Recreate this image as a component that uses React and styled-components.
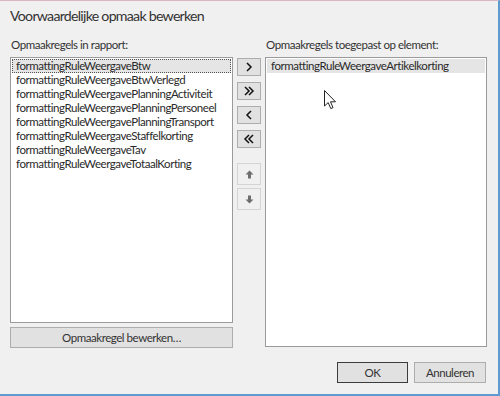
import React from "react";
import styled, { createGlobalStyle } from "styled-components";

const Global = createGlobalStyle`
  html, body { margin: 0; padding: 0; background: #f0f0f0; }
  body { font-family: Lato, "Noto Sans", sans-serif; }
`;

const Window = styled.div`
  position: relative;
  width: 500px;
  height: 396px;
  box-sizing: border-box;
  background: #f0f0f0;
  border-top: 1px solid #d9b7c6;
  border-right: 2px solid #5b9bd0;
  border-bottom: 2px solid #5b9bd0;
  color: #262626;
  font-size: 11.5px;
  letter-spacing: -0.45px;
  display: flex;
  flex-direction: column;
`;

const Title = styled.div`
  font-size: 14.2px;
  letter-spacing: -0.75px;
  line-height: 20px;
  color: #333;
  padding: 5px 0 0 10px;
  height: 36px;
  box-sizing: border-box;
`;

const Body = styled.div`
  display: grid;
  grid-template-columns: 223px 24px 222px;
  column-gap: 4px;
  margin-left: 10px;
`;

const Column = styled.div`
  display: flex;
  flex-direction: column;
`;

const Label = styled.div`
  height: 20px;
  line-height: 16px;
  padding-left: 1px;
  color: #333;
`;

const ListBox = styled.div`
  position: relative;
  height: ${(p) => p.$h}px;
  box-sizing: border-box;
  background: #fff;
  border: 1px solid #9a9a9a;
  padding: 1px 1px;
`;

const Item = styled.div`
  height: 14px;
  box-sizing: border-box;
  padding-left: ${(p) => (p.$focus ? 3 : 4)}px;
  white-space: nowrap;
  color: #2a2a2a;
  background: ${(p) => (p.$sel ? "#e5e5e5" : "transparent")};
  border: ${(p) => (p.$focus ? "1px dotted #555" : "none")};
  line-height: ${(p) => (p.$focus ? 12 : 14)}px;
`;

const WideButton = styled.button`
  margin-top: 4px;
  height: 21px;
  box-sizing: border-box;
  background: #e1e1e1;
  border: 1px solid #adadad;
  font-family: inherit;
  font-size: inherit;
  letter-spacing: inherit;
  color: #333;
  padding: 0;
`;

const ArrowColumn = styled.div`
  display: flex;
  flex-direction: column;
  padding-top: 21px;
  gap: 6px;
`;

const ArrowButton = styled.button`
  width: 24px;
  height: ${(p) => (p.$disabled ? 22 : 18)}px;
  box-sizing: border-box;
  padding: 0;
  margin-top: ${(p) => p.$mt || 0}px;
  background: ${(p) => (p.$disabled ? "#f0f0f0" : "#e1e1e1")};
  border: 1px solid ${(p) => (p.$disabled ? "#d4d4d4" : "#adadad")};
  display: flex;
  align-items: center;
  justify-content: center;
`;

const Footer = styled.div`
  display: flex;
  justify-content: flex-end;
  gap: 6px;
  padding: 14px 12px 0 0;
`;

const DialogButton = styled.button`
  width: ${(p) => p.$w}px;
  height: 21px;
  box-sizing: border-box;
  padding: 0;
  background: #e1e1e1;
  border: 1px solid ${(p) => (p.$default ? "#3c3c3c" : "#adadad")};
  font-family: inherit;
  font-size: inherit;
  letter-spacing: inherit;
  color: #333;
`;

const Cursor = styled.svg`
  position: absolute;
  left: 58px;
  top: 32px;
`;

const Chevron = ({ dir = "right", double = false }) => {
  const one = (ox) =>
    dir === "right"
      ? `M${ox} 1 L${ox + 4} 5 L${ox} 9`
      : `M${ox + 4} 1 L${ox} 5 L${ox + 4} 9`;
  return (
    <svg width="12" height="10" viewBox="0 0 12 10">
      {double ? (
        <>
          <path d={one(2)} stroke="#111" strokeWidth="1.5" fill="none" />
          <path d={one(6)} stroke="#111" strokeWidth="1.5" fill="none" />
        </>
      ) : (
        <path d={one(4)} stroke="#111" strokeWidth="1.5" fill="none" />
      )}
    </svg>
  );
};

const UpDown = ({ down }) => (
  <svg width="9" height="9" viewBox="0 0 9 9" style={down ? { transform: "rotate(180deg)" } : undefined}>
    <path d="M4.5 0.5 L8.5 4.5 L6 4.5 L6 8.5 L3 8.5 L3 4.5 L0.5 4.5 Z" fill="#6e6e6e" />
  </svg>
);

const leftRules = [
  "formattingRuleWeergaveBtw",
  "formattingRuleWeergaveBtwVerlegd",
  "formattingRuleWeergavePlanningActiviteit",
  "formattingRuleWeergavePlanningPersoneel",
  "formattingRuleWeergavePlanningTransport",
  "formattingRuleWeergaveStaffelkorting",
  "formattingRuleWeergaveTav",
  "formattingRuleWeergaveTotaalKorting",
];

export default function App() {
  return (
    <>
      <Global />
      <Window>
        <Title>Voorwaardelijke opmaak bewerken</Title>
        <Body>
          <Column>
            <Label>Opmaakregels in rapport:</Label>
            <ListBox $h={266}>
              {leftRules.map((r, i) => (
                <Item key={r} $sel={i === 0} $focus={i === 0}>
                  {r}
                </Item>
              ))}
            </ListBox>
            <WideButton>Opmaakregel bewerken…</WideButton>
          </Column>
          <ArrowColumn>
            <ArrowButton><Chevron dir="right" /></ArrowButton>
            <ArrowButton><Chevron dir="right" double /></ArrowButton>
            <ArrowButton><Chevron dir="left" /></ArrowButton>
            <ArrowButton><Chevron dir="left" double /></ArrowButton>
            <ArrowButton $disabled $mt={9}><UpDown /></ArrowButton>
            <ArrowButton $disabled $mt={-3}><UpDown down /></ArrowButton>
          </ArrowColumn>
          <Column>
            <Label>Opmaakregels toegepast op element:</Label>
            <ListBox $h={290}>
              <Item $sel>formattingRuleWeergaveArtikelkorting</Item>
              <Cursor width="13" height="20" viewBox="0 0 13 20">
                <path
                  d="M0.5 0.5 L0.5 16 L4.2 12.6 L6.8 18.6 L9 17.6 L6.5 11.8 L11.5 11.8 Z"
                  fill="#fff"
                  stroke="#222"
                  strokeWidth="1"
                  strokeLinejoin="round"
                />
              </Cursor>
            </ListBox>
          </Column>
        </Body>
        <Footer>
          <DialogButton $w={71} $default>OK</DialogButton>
          <DialogButton $w={72}>Annuleren</DialogButton>
        </Footer>
      </Window>
    </>
  );
}
